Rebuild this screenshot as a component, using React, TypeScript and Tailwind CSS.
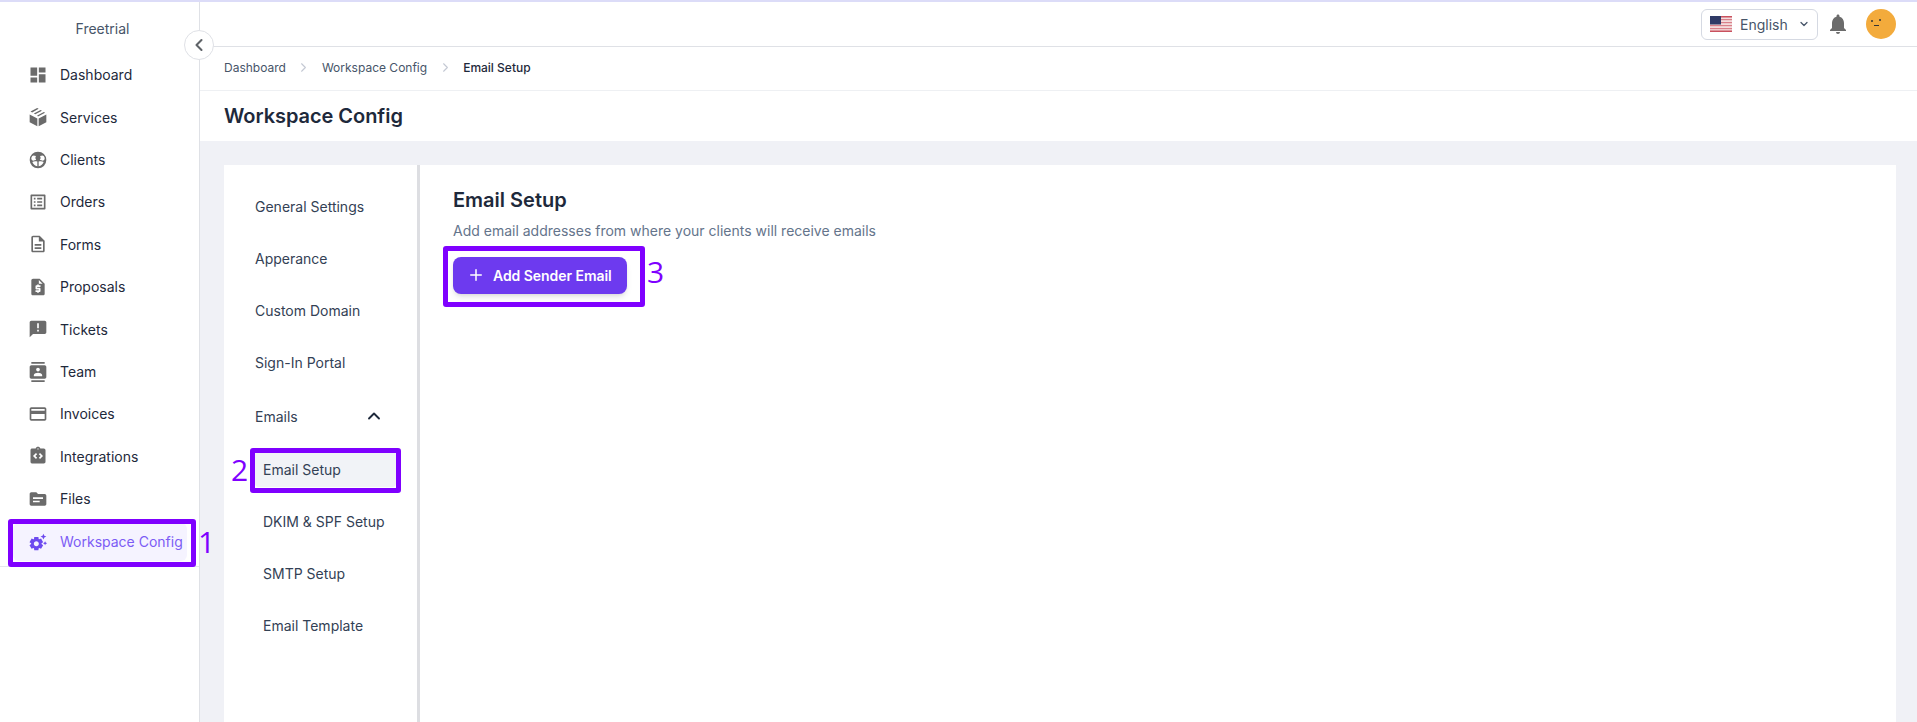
import { ChevronDown, ChevronLeft, ChevronRight, ChevronUp, Plus } from 'lucide-react';
import {
  MdDashboard,
  MdIntegrationInstructions,
  MdNotifications,
  MdOutlineCreditCard,
  MdOutlineDescription,
  MdOutlineListAlt,
  MdAnnouncement,
  MdContacts,
  MdRequestQuote,
  MdSettingsSuggest,
  MdTopic,
} from 'react-icons/md';

function ClientsIcon({ className }: { className?: string }) {
  return (
    <svg viewBox="0 0 24 24" className={className} fill="currentColor">
      <circle cx="12" cy="12" r="10" />
      <path d="M6.300 12.800a2.800 2.800 0 0 1 1.700-6 3 3 0 0 1 1.500.5 4 4 0 0 0 .3 4.700 7 7 0 0 0-3.500.8Z" fill="#fff" />
      <path d="M17.700 12.800a2.800 2.800 0 0 0-1.700-6 3 3 0 0 0-1.500.5 4 4 0 0 1-.3 4.700 7 7 0 0 1 3.500.8Z" fill="#fff" />
      <path d="M11.200 19.500a7.500 7.500 0 0 1-6-5c1.500-.9 3.500-1.200 6-.6ZM12.800 19.500a7.500 7.500 0 0 0 6-5c-1.500-.9-3.500-1.200-6-.6Z" fill="#fff" />
    </svg>
  );
}

function ServicesIcon({ className }: { className?: string }) {
  return (
    <svg viewBox="0 0 24 24" className={className} fill="currentColor">
      <path d="M2 9l9.200 4.800V23L2 18.200ZM22 9l-9.200 4.800V23l9.200-4.800Z" />
      <path d="M3 7l8-4.300 1.800 1L5 8ZM7 9.300l8-4.300 1.800 1-8 4.300ZM11 11.800l8-4.300 1.500.9-8.500 4.500Z" transform="translate(0 -1.500)" />
    </svg>
  );
}

const navItems = [
  { label: 'Dashboard', icon: MdDashboard },
  { label: 'Services', icon: ServicesIcon },
  { label: 'Clients', icon: ClientsIcon },
  { label: 'Orders', icon: MdOutlineListAlt },
  { label: 'Forms', icon: MdOutlineDescription },
  { label: 'Proposals', icon: MdRequestQuote },
  { label: 'Tickets', icon: MdAnnouncement },
  { label: 'Team', icon: MdContacts },
  { label: 'Invoices', icon: MdOutlineCreditCard },
  { label: 'Integrations', icon: MdIntegrationInstructions },
  { label: 'Files', icon: MdTopic },
];

const topTabs = ['General Settings', 'Apperance', 'Custom Domain', 'Sign-In Portal'];
const subTabs = ['DKIM & SPF Setup', 'SMTP Setup', 'Email Template'];

function Callout({ n, className, numClass }: { n: string; className: string; numClass: string }) {
  return (
    <>
      <div className={`absolute border-[5px] border-[#7f00ff] rounded-[3px] ${className}`} />
      <span className={`absolute text-[30px] leading-none text-[#7f00ff] font-['Open_Sans',sans-serif] ${numClass}`}>{n}</span>
    </>
  );
}

function FlagUS() {
  return (
    <svg viewBox="0 0 22 16" className="w-[22px] h-[16px]">
      <rect width="22" height="16" fill="#f3dcdc" />
      <rect y="0" width="22" height="1.500" fill="#c9515e" />
      <rect y="3" width="22" height="1.200" fill="#d9808a" />
      <rect y="6" width="22" height="1.200" fill="#d9808a" />
      <rect y="9" width="22" height="1.200" fill="#d9808a" />
      <rect y="12" width="22" height="1.200" fill="#d9808a" />
      <rect y="14.500" width="22" height="1.500" fill="#c9515e" />
      <rect width="11" height="8.500" fill="#2f3a66" />
    </svg>
  );
}

export default function App() {
  return (
    <div className="relative h-[722px] overflow-hidden bg-white font-['Inter',sans-serif] text-[14px] text-[#1e293b]">
      <div className="h-[2px] bg-[#dcdcf8]" />
      <div className="flex h-[720px]">
        <aside className="relative w-[200px] shrink-0 border-r border-[#dfe1e6] bg-white">
          <div className="pt-[16px] pl-[6px] h-[51.6px] text-center text-[#475569]">Freetrial</div>
          <nav>
            {navItems.map((item) => (
              <div key={item.label} className="flex items-center h-[42.4px] pl-[28px] gap-[12px]">
                <span className="w-[20px] flex justify-center text-[#6b6b6b]">
                  <item.icon className="w-[20px] h-[20px]" />
                </span>
                <span>{item.label}</span>
              </div>
            ))}
            <div className="mx-[13px] flex items-center h-[38px] mt-[3px] w-[174px] rounded-md bg-[#f5f3ff] pl-[15px] gap-[12px] text-[#7c5cf5]">
              <span className="w-[20px] flex justify-center">
                <MdSettingsSuggest className="w-[20px] h-[20px] text-[#6d4aef]" />
              </span>
              <span>Workspace Config</span>
            </div>
          </nav>
          <div className="absolute left-0 right-0 top-[564px] border-t border-[#e5e7eb]" />
        </aside>

        <main className="flex-1 flex flex-col min-w-0">
          <header className="h-[45px] shrink-0 border-b border-[#dfe1e6] flex items-center justify-end pr-[21px]">
            <div className="flex items-center h-[31px] w-[117px] border border-[#d5d9e2] rounded-md pl-[8px] text-[#475569]">
              <FlagUS />
              <span className="ml-[8px]">English</span>
              <ChevronDown className="ml-[10px] w-[12px] h-[12px]" strokeWidth={2.500} />
            </div>
            <MdNotifications className="ml-[8px] w-[24px] h-[24px] text-[#6b6b6b]" />
            <div className="relative ml-[16px] w-[30px] h-[30px] rounded-full bg-[#f3ab3c]">
              <span className="absolute left-[5px] top-[11px] w-[2px] h-[2px] rounded-full bg-[#333]" />
              <span className="absolute left-[13px] top-[10px] w-[2px] h-[2px] rounded-full bg-[#333]" />
              <span className="absolute left-[8px] top-[16px] w-[5px] h-[1px] bg-[#333]" />
            </div>
          </header>

          <div className="h-[44px] shrink-0 border-b border-[#eef0f3] flex items-center pb-[2px] pl-[24px] text-[12px] text-[#475569]">
            <span>Dashboard</span>
            <ChevronRight className="mx-[10.500px] w-[15px] h-[15px] text-[#c4c9d4]" strokeWidth={1.750} />
            <span>Workspace Config</span>
            <ChevronRight className="mx-[10.500px] w-[15px] h-[15px] text-[#c4c9d4]" strokeWidth={1.750} />
            <span className="font-medium text-[#1e293b]">Email Setup</span>
          </div>

          <div className="h-[50px] shrink-0 flex items-center pl-[24px] text-[20px] font-semibold tracking-[-0.05px] text-[#1e293b]">
            Workspace Config
          </div>

          <div className="flex-1 bg-[#f0f1f6] pt-[24px] pl-[24px] pr-[21px] min-h-0">
            <div className="flex h-full bg-white">
              <div className="shrink-0 border-r-[3px] border-[#dddee2] w-[196px] pl-[31px] pt-[15px] text-[#334155]">
                {topTabs.map((tab) => (
                  <div key={tab} className="h-[52px] flex items-center">{tab}</div>
                ))}
                <div className="h-[52px] flex items-center justify-between pr-[33px] mt-[2px]">
                  <span>Emails</span>
                  <ChevronUp className="w-[20px] h-[20px] text-[#1e293b]" strokeWidth={2.250} />
                </div>
                <div className="h-[36px] mt-[9px] mb-[8px] w-[141px] rounded-sm bg-[#f1f3f7] flex items-center pl-[8px]">Email Setup</div>
                {subTabs.map((tab) => (
                  <div key={tab} className="h-[52px] flex items-center pl-[8px]">{tab}</div>
                ))}
              </div>
              <div className="flex-1 pl-[33px] pt-[23px]">
                <h2 className="text-[20px] leading-[24px] font-semibold text-[#1e293b]">Email Setup</h2>
                <p className="mt-[9px] leading-[20px] text-[#64748b]">Add email addresses from where your clients will receive emails</p>
                <button className="mt-[16px] flex items-center h-[37px] w-[174px] rounded-lg bg-[#6d3aef] pl-[14px] pb-[1px] text-white font-semibold tracking-[-0.05px] shadow-md">
                  <Plus className="w-[18px] h-[18px] mr-[8px]" strokeWidth={2} />
                  Add Sender Email
                </button>
              </div>
            </div>
          </div>
        </main>
      </div>

      <button className="absolute left-[184px] top-[30px] w-[30px] h-[30px] rounded-full bg-white border border-[#dfe1e6] flex items-center justify-center text-[#5f6368]">
        <ChevronLeft className="w-[20px] h-[20px]" strokeWidth={2.500} />
      </button>

      <Callout n="1" className="left-[8px] top-[519px] w-[188px] h-[48px]" numClass="left-[198px] top-[527px]" />
      <Callout n="2" className="left-[250px] top-[448px] w-[151px] h-[45px]" numClass="left-[231px] top-[455px]" />
      <Callout n="3" className="left-[443px] top-[246px] w-[202px] h-[61px]" numClass="left-[647px] top-[257px]" />
    </div>
  );
}
